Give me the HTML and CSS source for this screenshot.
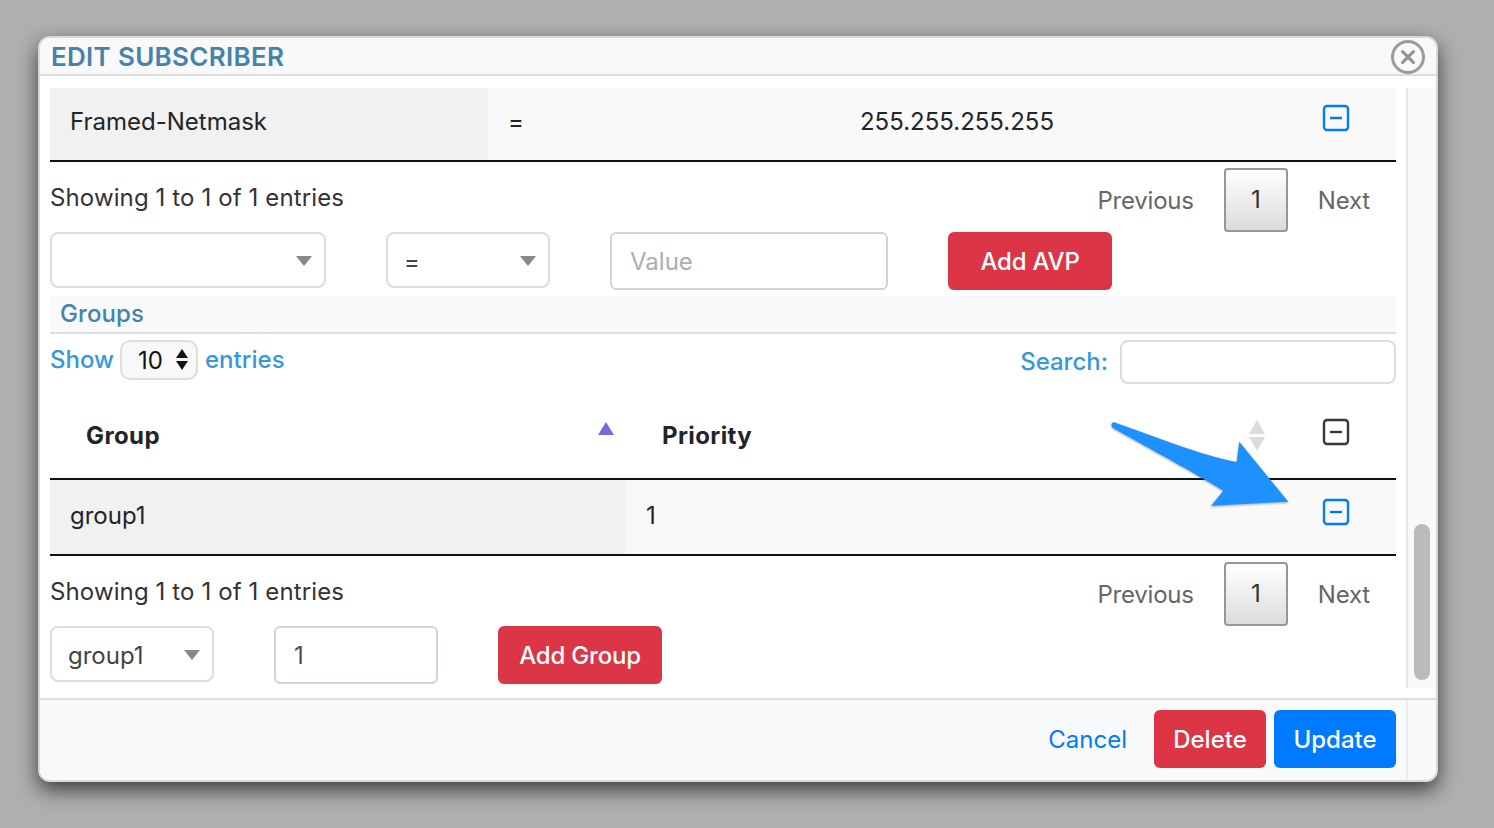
FILE: index.html
```html
<!DOCTYPE html>
<html lang="en">
<head>
    <meta charset="UTF-8">
    <title>Edit Subscriber</title>
    <link rel="stylesheet" href="styles.css">
</head>
<body>
    <div class="modal">
        <div class="modal-header">
            <h4>EDIT SUBSCRIBER</h4>
            <svg class="close-icon" width="34" height="34" viewBox="0 0 34 34">
                <circle cx="17" cy="17" r="15.5" fill="none" stroke="#9b9b9b" stroke-width="3"/>
                <path d="M11.5 11.5L22.5 22.5M22.5 11.5L11.5 22.5" stroke="#8e8e8e" stroke-width="3" stroke-linecap="round"/>
            </svg>
        </div>

        <div class="modal-main">
            <div class="modal-content">
                <div class="row avp-row">
                    <div class="cell key">Framed-Netmask</div>
                    <div class="cell">=</div>
                    <div class="cell value">255.255.255.255</div>
                    <div class="cell action">
                        <svg class="minus-icon blue" width="28" height="28" viewBox="0 0 28 28">
                            <rect x="2" y="2" width="24" height="24" rx="3" fill="none" stroke="currentColor" stroke-width="2.4"/>
                            <path d="M8 14H20" stroke="currentColor" stroke-width="2.4"/>
                        </svg>
                    </div>
                </div>

                <div class="table-info">
                    <span>Showing 1 to 1 of 1 entries</span>
                    <div class="pager">
                        <span>Previous</span>
                        <button class="page-btn">1</button>
                        <span>Next</span>
                    </div>
                </div>

                <div class="add-form">
                    <div class="select-wrap w-attr"><select></select></div>
                    <div class="select-wrap w-op"><select><option>=</option></select></div>
                    <input class="text-input w-value" type="text" placeholder="Value">
                    <button class="btn red w-add">Add AVP</button>
                </div>

                <div class="section-title">Groups</div>

                <div class="table-tools">
                    <div class="length">
                        <span>Show</span>
                        <div class="length-select">
                            <select><option>10</option></select>
                        </div>
                        <span>entries</span>
                    </div>
                    <div class="search">
                        <span>Search:</span>
                        <input type="text">
                    </div>
                </div>

                <div class="row group-head">
                    <div class="cell th first">Group<span class="sort-up"></span></div>
                    <div class="cell th second">Priority<span class="sort-both"></span></div>
                    <div class="cell action">
                        <svg class="minus-icon dark" width="28" height="28" viewBox="0 0 28 28">
                            <rect x="2" y="2" width="24" height="24" rx="3" fill="none" stroke="currentColor" stroke-width="2.4"/>
                            <path d="M8 14H20" stroke="currentColor" stroke-width="2.4"/>
                        </svg>
                    </div>
                </div>
                <div class="row group-row">
                    <div class="cell key">group1</div>
                    <div class="cell">1</div>
                    <div class="cell action">
                        <svg class="minus-icon blue" width="28" height="28" viewBox="0 0 28 28">
                            <rect x="2" y="2" width="24" height="24" rx="3" fill="none" stroke="currentColor" stroke-width="2.4"/>
                            <path d="M8 14H20" stroke="currentColor" stroke-width="2.4"/>
                        </svg>
                    </div>
                </div>

                <div class="table-info">
                    <span>Showing 1 to 1 of 1 entries</span>
                    <div class="pager">
                        <span>Previous</span>
                        <button class="page-btn">1</button>
                        <span>Next</span>
                    </div>
                </div>

                <div class="add-form">
                    <div class="select-wrap w-group"><select><option>group1</option></select></div>
                    <input class="text-input w-priority" type="text" value="1">
                    <button class="btn red w-add">Add Group</button>
                </div>
            </div>

            <div class="scroll-track">
                <div class="scroll-thumb"></div>
            </div>
        </div>

        <div class="modal-footer">
            <a class="cancel">Cancel</a>
            <button class="btn red delete">Delete</button>
            <button class="btn blue-btn update">Update</button>
        </div>
    </div>

    <svg class="arrow" width="190" height="96" viewBox="0 0 190 96">
        <path d="M3 8C0.500 6 1 1.500 5 2.500C40 15 90 34 115 39.500C120 40.500 123 41.500 126.700 41.700L129.300 21.700L178.300 81.700L101 85.700L113.300 70.700C85 53 40 29 3 8Z" fill="#1e90ff"/>
    </svg>
</body>
</html>
```

FILE: styles.css
```css
body {
    margin: 0;
    height: 828px;
    overflow: hidden;
    background-color: #afafaf;
    font-family: Inter, "Noto Sans", sans-serif;
    font-size: 24px;
    color: #212529;
}

/* Fenetre */
.modal {
    box-sizing: border-box;
    width: 1400px;
    height: 746px;
    margin: 36px 0 0 38px;
    background: white;
    border: 2px solid #d9d9d9;
    border-radius: 12px;
    box-shadow: 0 8px 20px rgba(0, 0, 0, 0.65);
    display: flex;
    flex-direction: column;
    overflow: hidden;
}

.modal-header {
    height: 36px;
    flex: none;
    display: flex;
    align-items: center;
    justify-content: space-between;
    padding: 0 11px;
    background: #f8f9fa;
    border-bottom: 2px solid #dddddd;
}

.modal-header h4 {
    margin: 0;
    font-size: 26px;
    font-weight: 600;
    letter-spacing: 0.3px;
    color: #4682a9;
}

.close-icon {
    position: relative;
    top: 1px;
}

.modal-main {
    height: 622px;
    flex: none;
    display: flex;
}

.modal-content {
    width: 1346px;
    padding: 12px 0 0 10px;
}

/* Lignes de tableau */
.row {
    display: grid;
    align-items: center;
}

.avp-row {
    height: 72px;
    grid-template-columns: 438px 112px 714px 82px;
    background: #f9f9f9;
    border-bottom: 2px solid #111;
}

.group-head {
    height: 86px;
    margin-top: 8px;
    grid-template-columns: 576px 688px 82px;
    border-bottom: 2px solid #111;
}

.group-row {
    height: 74px;
    grid-template-columns: 576px 688px 82px;
    background: #f9f9f9;
    border-bottom: 2px solid #111;
}

.cell {
    padding-left: 20px;
}

.avp-row .cell,
.group-row .cell {
    padding-bottom: 5px;
}

.avp-row .cell.value {
    padding: 0 0 5px;
    text-align: center;
}

.group-row .cell {
    padding-bottom: 4px;
}

.cell.key {
    box-sizing: border-box;
    height: 100%;
    display: flex;
    align-items: center;
    background: #f1f1f1;
}

.cell.action {
    padding: 0 0 6px 8px;
    display: flex;
}

.avp-row .cell.action {
    padding-bottom: 12px;
}

.group-row .cell.action {
    padding-bottom: 10px;
}

.minus-icon {
    display: block;
}

.minus-icon.blue {
    color: #007bff;
}

.minus-icon.dark {
    color: #343a40;
}

.th {
    position: relative;
    height: 100%;
    display: flex;
    align-items: center;
    padding-left: 36px;
    font-weight: 700;
    letter-spacing: 0.4px;
}

.sort-up {
    position: absolute;
    left: 548px;
    top: 30px;
    border-left: 8.5px solid transparent;
    border-right: 8.5px solid transparent;
    border-bottom: 13px solid #6f6fd8;
}

.sort-both {
    position: absolute;
    left: 623px;
    top: 28px;
    width: 17px;
    height: 31px;
}

.sort-both::before,
.sort-both::after {
    content: "";
    position: absolute;
    left: 0;
    border-left: 8.5px solid transparent;
    border-right: 8.5px solid transparent;
}

.sort-both::before {
    top: 0;
    border-bottom: 14px solid #dcdcdc;
}

.sort-both::after {
    bottom: 0;
    border-top: 14px solid #dcdcdc;
}

/* Infos et pagination */
.table-info {
    height: 70px;
    display: flex;
    justify-content: space-between;
    color: #333;
}

.table-info > span {
    margin-top: 21px;
    letter-spacing: 0.12px;
}

.pager {
    display: flex;
    align-items: center;
    padding: 6px 26px 0 0;
    color: #666;
    letter-spacing: -0.2px;
}

.page-btn {
    box-sizing: border-box;
    width: 64px;
    height: 64px;
    margin: 0 30px;
    padding-bottom: 2px;
    font: inherit;
    color: #333;
    background: linear-gradient(to bottom, white, #dcdcdc);
    border: 2px solid #979797;
    border-radius: 4px;
}

/* Formulaires */
.add-form {
    height: 64px;
    display: flex;
    align-items: flex-start;
    gap: 60px;
}

.select-wrap {
    position: relative;
    height: 56px;
}

.select-wrap::after {
    content: "";
    position: absolute;
    right: 14px;
    top: 24px;
    border-left: 8px solid transparent;
    border-right: 8px solid transparent;
    border-top: 10px solid #888;
}

.select-wrap select {
    box-sizing: border-box;
    width: 100%;
    height: 100%;
    padding: 2px 0 0 16px;
    appearance: none;
    font: inherit;
    color: #444;
    background: white;
    border: 2px solid #dddddd;
    border-radius: 8px;
}

.w-attr {
    width: 276px;
}

.w-op {
    width: 164px;
}

.w-group {
    width: 164px;
}

.text-input {
    box-sizing: border-box;
    height: 58px;
    padding: 0 18px;
    font: inherit;
    color: #495057;
    background: white;
    border: 2px solid #ced4da;
    border-radius: 6px;
}

.text-input::placeholder {
    color: #a9aeb3;
}

.w-value {
    width: 278px;
}

.w-priority {
    width: 164px;
}

.btn {
    box-sizing: border-box;
    height: 58px;
    font: inherit;
    font-weight: 500;
    color: white;
    border: none;
    border-radius: 6px;
}

.btn.red {
    background: #dc3545;
}

.btn.blue-btn {
    background: #007bff;
}

.w-add {
    width: 164px;
    letter-spacing: -0.2px;
}

/* Groupes */
.section-title {
    height: 36px;
    line-height: 36px;
    padding-left: 10px;
    font-weight: 500;
    letter-spacing: 0.1px;
    color: #4682a9;
    background: #f8f9fa;
    border-bottom: 2px solid #dddddd;
}

.table-tools {
    height: 50px;
    padding-top: 6px;
    box-sizing: border-box;
    display: flex;
    justify-content: space-between;
    align-items: flex-start;
    color: #3498db;
    font-weight: 500;
}

.length,
.search {
    display: flex;
    align-items: center;
    gap: 6px;
}

.length > span {
    margin-top: -2px;
}

.length > span:last-child {
    margin-left: 1px;
    letter-spacing: 0.05px;
}

.search {
    gap: 12px;
}

.search span {
    margin-top: -2px;
}

.search input {
    box-sizing: border-box;
    width: 276px;
    height: 44px;
    background: white;
    border: 2px solid #dddddd;
    border-radius: 8px;
}

.length-select {
    position: relative;
    width: 78px;
    height: 40px;
}

.length-select::before,
.length-select::after {
    content: "";
    position: absolute;
    left: 56px;
    border-left: 6px solid transparent;
    border-right: 6px solid transparent;
}

.length-select::before {
    top: 9px;
    border-bottom: 9px solid #111;
}

.length-select::after {
    top: 21px;
    border-top: 9px solid #111;
}

.length-select select {
    box-sizing: border-box;
    width: 100%;
    height: 100%;
    padding: 0 0 0 16px;
    appearance: none;
    font: inherit;
    font-weight: 400;
    color: #111;
    background: #f8f8f8;
    border: 2px solid #dddddd;
    border-radius: 10px;
}

/* Barre de defilement */
.scroll-track {
    box-sizing: border-box;
    width: 30px;
    height: 600px;
    margin: 12px 0 0 10px;
    background: #f9f9f9;
    border-left: 2px solid #e8e8e8;
    display: flex;
    align-items: flex-end;
    justify-content: center;
    padding-bottom: 8px;
}

.scroll-thumb {
    width: 16px;
    height: 156px;
    background: #bbbbbb;
    border-radius: 8px;
}

/* Pied */
.modal-footer {
    position: relative;
    flex: 1;
    display: flex;
    align-items: flex-start;
    justify-content: flex-end;
    padding: 10px 40px 0 0;
    background: #f8f9fa;
    border-top: 2px solid #dddddd;
}

.modal-footer::after {
    content: "";
    position: absolute;
    right: 28px;
    top: 0;
    bottom: 0;
    width: 2px;
    background: #ececec;
}

.cancel {
    margin: 15px 27px 0 0;
    color: #007bff;
}

.delete {
    width: 112px;
    margin-right: 8px;
}

.update {
    width: 122px;
}

/* Annotation */
.arrow {
    position: absolute;
    left: 1110px;
    top: 420px;
    filter: drop-shadow(0 1px 1px rgba(0, 0, 0, 0.35));
}
```
